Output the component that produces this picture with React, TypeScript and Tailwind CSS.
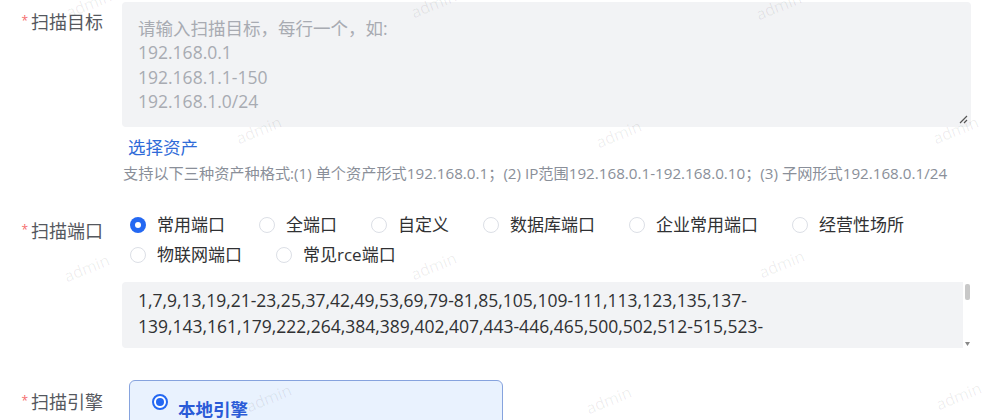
import React from "react";

const FONT = { fontFamily: '"Open Sans","Noto Sans CJK SC",sans-serif' };

function Label({ text }: { text: string }) {
  return (
    <div className="flex w-[122px] shrink-0 items-center justify-end pr-[19px] text-[18px] leading-[24px] text-[#55585e]">
      <span className="mr-[3px] mt-[-2px] text-[12px] text-[#f56c6c]">*</span>
      <span>{text}</span>
    </div>
  );
}

function Radio({ label, checked }: { label: string; checked?: boolean }) {
  return (
    <div className="mr-[34px] flex h-[30px] items-center">
      {checked ? (
        <span className="flex h-[16px] w-[16px] items-center justify-center rounded-full bg-[#2468f2]">
          <span className="h-[6px] w-[6px] rounded-full bg-white" />
        </span>
      ) : (
        <span className="h-[16px] w-[16px] rounded-full border border-[#dcdfe6] bg-white" />
      )}
      <span className="ml-[11px] text-[17px] text-[#303133]">{label}</span>
    </div>
  );
}

const marks: [number, number][] = [
  [65, -8], [410, -8], [755, -6],
  [235, 118], [595, 122], [932, 118],
  [63, 256], [410, 254], [758, 252],
  [245, 386], [585, 388], [935, 384],
];

export default function App() {
  return (
    <div className="relative h-[420px] w-[989px] overflow-hidden bg-white" style={FONT}>
      {/* Row 1 */}
      <div className="flex pr-[18px]">
        <div className="pt-[10px]">
          <Label text="扫描目标" />
        </div>
        <div className="flex-1">
          <div className="relative mt-[2px] h-[125px] rounded-[4px] bg-[#f2f3f5] pl-[16px] pt-[14px] text-[17.5px] leading-[24.4px] text-[#a8abb2]">
            <div>请输入扫描目标，每行一个，如:</div>
            <div>192.168.0.1</div>
            <div>192.168.1.1-150</div>
            <div>192.168.1.0/24</div>
            <svg className="absolute bottom-[3px] right-[3px]" width="10" height="10" viewBox="0 0 10 10">
              <path d="M9 2 L2 9 M9 6 L6 9" stroke="#555" strokeWidth="1.2" />
            </svg>
          </div>
          <div className="ml-[6px] mt-[8px] text-[17.5px] leading-[24px] text-[#2f6bd8]">选择资产</div>
          <div className="ml-[1px] mt-[4px] whitespace-nowrap text-[15.2px] leading-[20px] text-[#8a8f99]">
            支持以下三种资产种格式:(1) 单个资产形式192.168.0.1；(2) IP范围192.168.0.1-192.168.0.10；(3) 子网形式192.168.0.1/24
          </div>
        </div>
      </div>

      {/* Row 2 */}
      <div className="mt-[27px] flex pr-[18px]">
        <div className="pt-[9px]">
          <Label text="扫描端口" />
        </div>
        <div className="flex-1">
          <div className="flex flex-wrap pl-[8px]">
            <Radio label="常用端口" checked />
            <Radio label="全端口" />
            <Radio label="自定义" />
            <Radio label="数据库端口" />
            <Radio label="企业常用端口" />
            <Radio label="经营性场所" />
            <Radio label="物联网端口" />
            <Radio label="常见rce端口" />
          </div>
          <div className="mt-[12px] flex h-[66px] overflow-hidden rounded-l-[4px]">
            <div className="flex-1 bg-[#f2f3f5] pl-[16px] pt-[5px] text-[17.5px] leading-[26px] text-[#303133]">
              <div className="whitespace-nowrap">1,7,9,13,19,21-23,25,37,42,49,53,69,79-81,85,105,109-111,113,123,135,137-</div>
              <div className="whitespace-nowrap">139,143,161,179,222,264,384,389,402,407,443-446,465,500,502,512-515,523-</div>
            </div>
            <div className="flex w-[8px] flex-col items-center justify-between bg-white pb-[2px] pt-[2px]">
              <div className="h-[16px] w-[5px] rounded-[2px] bg-[#c8c8c8]" />
              <svg width="5" height="4" viewBox="0 0 5 4">
                <path d="M0 0 L5 0 L2.5 4 Z" fill="#888" />
              </svg>
            </div>
          </div>
        </div>
      </div>

      {/* Row 3 */}
      <div className="mt-[32px] flex pr-[18px]">
        <div className="pt-[10px]">
          <Label text="扫描引擎" />
        </div>
        <div className="flex-1">
          <div className="ml-[7px] flex h-[70px] w-[374px] rounded-[6px] border border-[#86a3de] bg-[#e9f2fe] pl-[22px] pt-[13px]">
            <span className="flex h-[16px] w-[16px] items-center justify-center rounded-full border-[2px] border-[#2468f2] bg-white">
              <span className="h-[8px] w-[8px] rounded-full bg-[#2468f2]" />
            </span>
            <span className="ml-[10px] mt-[3px] text-[17.5px] font-bold leading-[24px] text-[#2a5bd7]">本地引擎</span>
          </div>
        </div>
      </div>

      {/* watermarks */}
      {marks.map(([x, y], i) => (
        <div
          key={i}
          className="pointer-events-none absolute -rotate-[22deg] select-none text-[16px] text-[#000]/[0.07]"
          style={{ left: x, top: y }}
        >
          admin
        </div>
      ))}
    </div>
  );
}
